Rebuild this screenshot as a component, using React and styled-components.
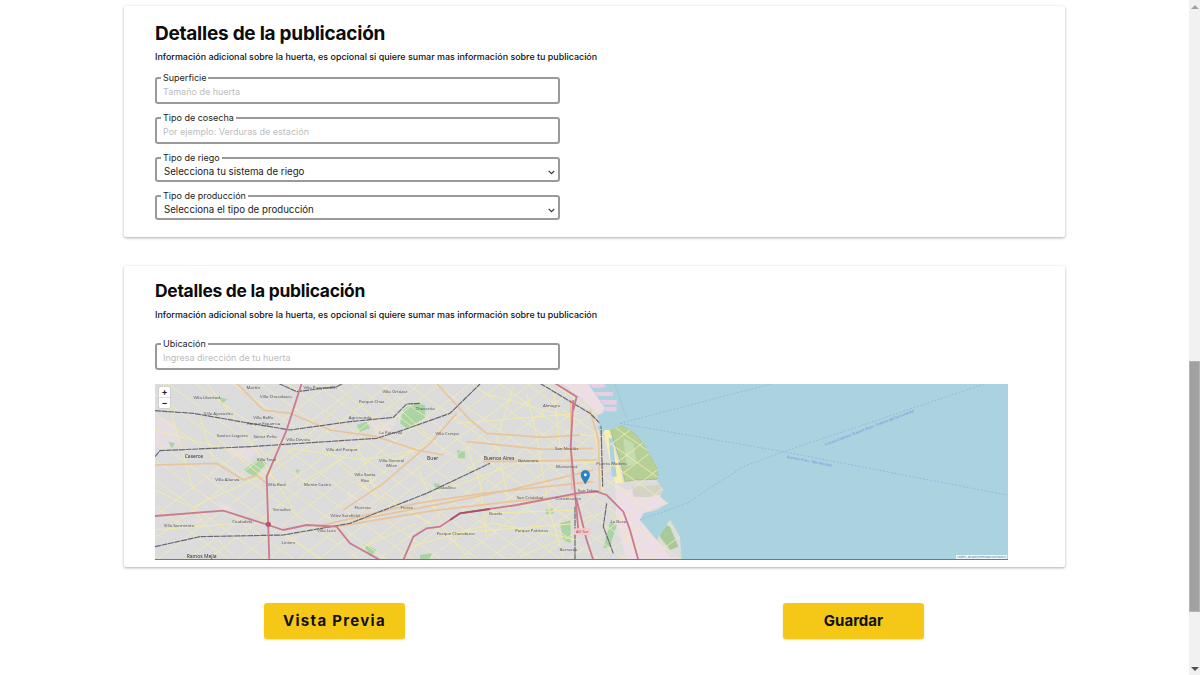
import React from 'react';
import styled, { createGlobalStyle } from 'styled-components';

const GlobalStyle = createGlobalStyle`
  html, body {
    margin: 0;
    padding: 0;
    background: #fff;
    font-family: "Inter", "Noto Sans", sans-serif;
    color: #111;
  }
`

const chevron = "data:image/svg+xml,%3Csvg xmlns='http://www.w3.org/2000/svg' width='7' height='5'%3E%3Cpath d='M.7 .9L3.5 3.6L6.3 .9' fill='none' stroke='%23333' stroke-width='1.2'/%3E%3C/svg%3E"

const Shell = styled.div`
  display: flex;
  height: 675px;
  overflow: hidden;
`

const Page = styled.main`
  flex: 1;
  padding: 6px 124px 0;
  box-sizing: border-box;
`

const Card = styled.section`
  background: #fff;
  box-shadow: 0 1px 3px rgba(0, 0, 0, 0.32);
  border-radius: 2px;
  padding: ${(p) => p.$padding};
  margin-bottom: 29px;
  box-sizing: border-box;
  height: ${(p) => p.$height}px;
`

const Title = styled.h2`
  margin: 0;
  font-size: ${(p) => p.$size}px;
  line-height: 24px;
  font-weight: 700;
  letter-spacing: -0.25px;
  color: #0c0c0c;
`

const Subtitle = styled.p`
  margin: ${(p) => p.$top}px 0 ${(p) => p.$bottom}px;
  font-size: 8.94px;
  line-height: 12px;
  font-weight: 500;
  color: #111;
`

const Field = styled.fieldset`
  width: 405px;
  margin: 0 0 ${(p) => p.$gap}px;
  padding: 0 6px;
  box-sizing: border-box;
  border: 2px solid #9a9a9a;
  border-radius: 3px;
  min-width: 0;
`

const Legend = styled.legend`
  padding: 0 2px;
  margin-left: -2px;
  font-size: 9px;
  line-height: 12px;
  color: #222;
`

const TextInput = styled.input`
  display: block;
  width: 100%;
  height: 15px;
  margin-bottom: 3px;
  padding: 0;
  border: 0;
  outline: 0;
  font-family: inherit;
  font-size: 9px;
  color: #222;
  background: transparent;

  &::placeholder {
    color: #bcbcbc;
    opacity: 1;
  }
`

const SelectInput = styled.select`
  appearance: none;
  display: block;
  width: calc(100% + 6px);
  height: 16px;
  margin: 0 -6px 0 0;
  padding: 0 0 2px 1px;
  border: 0;
  outline: 0;
  background: url("${chevron}") no-repeat right 3px center;
  font-family: inherit;
  font-size: 9.7px;
  color: #222;
`

const MapFrame = styled.div`
  position: relative;
  width: 853px;
  height: 176px;
  margin-top: 14px;
  overflow: hidden;
  border-bottom: 1px solid #777;
  box-sizing: border-box;
`

const MapDrawing = styled.svg`
  display: block;
  width: 853px;
  height: 175px;
  filter: blur(0.35px);
`

const ZoomBox = styled.div`
  position: absolute;
  top: 3px;
  left: 4px;
  width: 11px;
  display: flex;
  flex-direction: column;
  background: #fff;
  border-radius: 1px;
  box-shadow: 0 0 1px rgba(0, 0, 0, 0.5);
`

const ZoomKey = styled.span`
  height: 10px;
  font-size: 9px;
  line-height: 10px;
  font-weight: 700;
  text-align: center;
  color: #222;
  & + & {
    border-top: 1px solid #ddd;
  }
`

const Attribution = styled.div`
  position: absolute;
  right: 1px;
  bottom: 0;
  padding: 0 1px;
  font-size: 2.6px;
  line-height: 4px;
  color: #4a7fb5;
  background: rgba(255, 255, 255, 0.8);
`

const Actions = styled.div`
  display: flex;
  justify-content: space-between;
  padding: 7px 141px 0 140px;
`

const ActionButton = styled.button`
  width: 141px;
  height: 36px;
  padding: 0 0 2px;
  border: 0;
  border-radius: 3px;
  background: #f5c818;
  box-shadow: 0 1px 2px rgba(200, 160, 0, 0.35);
  font-family: inherit;
  font-size: ${(p) => p.$size}px;
  font-weight: 700;
  letter-spacing: ${(p) => p.$spacing}px;
  color: #111;
`

const Scrollbar = styled.aside`
  width: 11px;
  flex: none;
  display: flex;
  flex-direction: column;
  align-items: center;
  background: #f1f1f1;
`

const ScrollArrow = styled.span`
  width: 0;
  height: 0;
  margin: ${(p) => p.$margin};
  border-left: 4px solid transparent;
  border-right: 4px solid transparent;
  ${(p) => (p.$down ? 'border-top: 4px solid #505050;' : 'border-bottom: 4px solid #a3a3a3;')}
`

const ScrollThumb = styled.div`
  width: 100%;
  height: 251px;
  margin-top: 352px;
  background: #a1a1a1;
  border: 1px solid #b5b5b5;
  box-sizing: border-box;
`

const landShape = 'M15 12H1315L1365 85L1360 100L1342 105L1350 135L1365 150L1380 150L1415 135L1455 160L1480 190L1520 260L1525 280L1520 300L1540 330L1530 350L1555 370L1520 390L1480 400L1470 420L1520 480L1560 420L1590 470L1595 540H15Z'

// the regular arterial grid of the city, two diagonal families
const risingStreets = Array.from({ length: 26 }, (_, i) => {
  const x = -160 + i * 82 + ((i * 37) % 29)
  return `M${x} 540L${x + 700} 12`
})

const fallingStreets = Array.from({ length: 24 }, (_, i) => {
  const x = -500 + i * 90 + ((i * 23) % 31)
  return `M${x} 12L${x + 740} 540`
})

const minorStreets = [
  'M40 10L130 330', 'M15 150L240 210L330 285', 'M15 330L120 380', 'M130 380L340 285', 'M170 10L280 150',
  'M280 150L450 420', 'M330 285L430 205L590 60', 'M430 205L640 240L800 210', 'M440 315L560 245L700 370',
  'M620 190L680 340', 'M600 300L840 430', 'M700 40L900 230', 'M560 20L720 150', 'M710 250L860 180',
  'M800 260L890 460L960 540', 'M880 330L1100 250L1290 250', 'M1000 400L1290 390', 'M1090 20L1040 180L1080 390',
  'M1130 40L1160 170L1200 400L1240 530', 'M950 200L990 310L1010 470', 'M890 460L1290 430', 'M780 500L1030 430L1290 480',
  'M15 450L260 430', 'M120 380L250 530', 'M400 465L520 540', 'M640 500L800 430', 'M1110 530L1230 480', 'M1000 40L1290 120',
  'M920 130L1290 100', 'M1210 20L1230 200', 'M150 110L190 240', 'M1290 250L1350 245', 'M1270 160L1340 170', 'M1290 420L1350 400',
  'M1380 400L1440 470', 'M1335 150L1360 340',
]

const primaryRoads = [
  'M260 10L340 90L420 100L540 150L680 170L800 210L880 225', 'M860 10L960 120L1010 160L1180 172L1290 165',
  'M15 255L200 250L280 300L320 285L350 310', 'M580 390L700 310L840 190L920 100', 'M950 185L1180 208L1330 205',
  'M1000 245L1340 240', 'M500 440L800 370L1000 340L1330 305', 'M560 440L850 392L1080 365L1290 345',
  'M620 420L880 370L1100 325L1330 270', 'M1262 60L1265 330', 'M1320 90L1345 180L1350 335',
]

const motorways = [
  'M455 10L410 150L350 290L358 540', 'M15 408L220 392L355 435L400 450L470 435L560 440L600 490L690 540',
  'M760 540L790 470L830 445L870 440L930 400L1100 375L1280 340', 'M1270 60L1262 200L1275 340L1285 450',
  'M1215 10L1280 50L1270 90', 'M1278 340L1340 335L1370 345L1420 395L1440 450L1465 540', 'M1280 360L1310 480L1330 540',
]

const railways = [
  'M15 92L130 100L300 130L420 150L600 125L730 112L770 72L810 70', 'M15 230L30 212L300 200L680 175L760 150L900 100L990 12',
  'M15 500L150 470L400 465L600 430L830 340L1020 250', 'M385 10L440 35L560 20L580 10', 'M1170 10L1320 100L1350 130',
  'M1275 380L1275 540', 'M1353 130L1358 320', 'M1370 370L1360 440L1390 520',
]

const greens = [
  'M750 130L760 90L790 68L825 75L825 115L770 145Z', 'M280 270L330 235L350 250L315 290Z', 'M920 210L945 215L945 235L925 235Z',
  'M205 50L232 58L215 72Z', 'M620 135L650 125L660 145L630 155Z', 'M850 310L870 312L860 330Z', 'M640 490L680 510L660 530Z',
  'M1185 390L1210 385L1212 400L1190 405Z', 'M810 525L845 520L840 540L810 540Z', 'M1230 430L1262 420L1262 490L1240 480Z',
  'M1380 425L1400 435L1380 500L1360 505Z', 'M55 185L75 190L65 205Z', 'M435 268L450 270L442 282Z',
]

const pale = [
  'M15 110L70 125L90 190L40 210L15 200Z', 'M220 200L330 195L300 240L240 225Z', 'M660 125L740 120L725 155L680 165Z',
  'M200 360L260 390L225 405Z', 'M590 340L600 330L610 370L595 365Z', 'M120 420L160 415L150 432Z',
]

const labels = [
  ['Martín', 310, 26], ['Villa Pueyrredón', 510, 26], ['Villa Ortúzar', 735, 38], ['Parque Chas', 665, 69], ['Villa Libertad', 170, 58],
  ['Villa Chacabuco', 378, 55], ['Villa Ayacucho', 205, 104], ['Villa Raffo', 340, 117], ['Parque Figueroa', 340, 134],
  ['Agronomía', 630, 116], ['Chacarita', 825, 89], ['La Paternal', 722, 161], ['Almagro', 1205, 82], ['Santos Lugares', 247, 171],
  ['Sáenz Peña', 345, 174], ['Villa Devoto', 445, 184], ['Villa Crespo', 892, 164], ['Villa del Parque', 575, 214],
  ['Villa Tesei', 350, 242], ['Villa General', 725, 247], ['Mitre', 725, 262],
  ['Balvanera', 1135, 247], ['San Nicolás', 1250, 211], ['Monserrat', 1250, 264], ['Villa Santa', 645, 289], ['Rita', 645, 306],
  ['Villa Alianza', 232, 302], ['Villa Real', 380, 318], ['Monte Castro', 503, 318], ['Caballito', 890, 327], ['Floresta', 638, 387],
  ['Flores', 770, 387], ['Vélez Sarsfield', 585, 411], ['Versalles', 395, 394], ['Ciudadela', 277, 429], ['Villa Sarmiento', 87, 440],
  ['Villa Luro', 530, 456], ['Boedo', 1037, 404], ['San Cristóbal', 1140, 357], ['Parque Chacabuco', 917, 464],
  ['Parque Patricios', 1145, 457], ['Barracas', 1255, 514], ['Liniers', 415, 492], ['Constitución', 1255, 359],
  ['Puerto Madero', 1385, 256], ['San Telmo', 1315, 336], ['La Boca', 1405, 428],
]

const bigLabels = [
  ['Caseros', 132, 235], ['Buer', 848, 241], ['Buenos Aires', 1047, 241], ['Ramos Mejía', 155, 535],
]

const CityMap = () => (
  <MapDrawing viewBox="15 12 2559 525" preserveAspectRatio="none">
    <defs>
      <pattern id="blocks" width="6" height="6" patternUnits="userSpaceOnUse" patternTransform="rotate(32)">
        <rect width="6" height="6" fill="#d6d6d6" />
        <path d="M0 0H6M0 0V6" stroke="#f5f5f5" strokeWidth="1.2" />
      </pattern>
      <clipPath id="land">
        <path d={landShape} />
      </clipPath>
    </defs>
    <rect x="15" y="12" width="2559" height="528" fill="#aad3df" />
    <g fill="#e8cfe3">
      <path d="M1315 12H1362L1368 22L1330 24Z" />
      <path d="M1330 36H1388L1390 48L1342 48Z" />
      <path d="M1350 60H1400L1400 74L1360 74Z" />
      <path d="M1362 80H1400L1400 94L1368 94Z" />
    </g>
    <path d="M1395 12L1430 115" fill="none" stroke="#9fb9c4" strokeWidth="1.5" />
    <path d={landShape} fill="url(#blocks)" />
    <g clipPath="url(#land)">
      <path d="M1240 12H1315L1365 85L1345 105L1300 60Z" fill="#ecdde6" />
      <path d="M1395 310L1430 330L1500 320L1550 370L1480 400L1470 420L1520 480L1560 530L1595 540H1430L1400 430Z" fill="#ecdde6" />
      {pale.map((d) => <path key={d} d={d} fill="#e6dde3" />)}
      <path d="M1360 150L1380 150L1420 310L1395 310Z" fill="#f7efb0" />
      <path d="M1376 175L1388 175L1400 290L1386 290Z" fill="#aad3df" />
      <path d="M1350 135L1365 150L1352 165L1342 140Z" fill="#aad3df" />
      <path d="M1380 145L1415 135L1455 160L1480 190L1520 260L1525 280L1520 298L1455 300L1425 305L1410 240L1390 180Z" fill="#b6cf97" stroke="#8aa76f" strokeWidth="1.5" />
      <path d="M1420 175L1450 190L1460 250L1430 260Z" fill="#c3dcb0" />
      <path d="M1445 320L1530 315L1538 340L1500 352L1450 350Z" fill="#d5d3c5" />
      <path d="M1530 430L1560 440L1585 500L1560 510L1530 470Z" fill="#a9c99a" />
      {greens.map((d) => <path key={d} d={d} fill="#a9d4a4" />)}
      <g fill="none" stroke="#f1ebb0" strokeWidth="2.6">
        {risingStreets.map((d) => <path key={d} d={d} />)}
        {fallingStreets.map((d) => <path key={d} d={d} />)}
      </g>
      <g fill="none" stroke="#f2eba2" strokeWidth="3">
        {minorStreets.map((d) => <path key={d} d={d} />)}
      </g>
      <g fill="none" stroke="#e9c49a" strokeWidth="5">
        {primaryRoads.map((d) => <path key={d} d={d} />)}
      </g>
      <g fill="none" stroke="#666670" strokeWidth="3.5" strokeDasharray="18 2">
        {railways.map((d) => <path key={d} d={d} />)}
      </g>
      <g fill="none" stroke="#cc7a8e" strokeWidth="5.5">
        {motorways.map((d) => <path key={d} d={d} />)}
      </g>
      <path d="M900 420L930 400L1020 387" fill="none" stroke="#a85068" strokeWidth="5.5" />
      <circle cx="355" cy="433" r="8" fill="#b8566e" />
    </g>
    <g fill="none" stroke="#7f9fd8" strokeWidth="1.5" strokeDasharray="6 5">
      <path d="M1410 130L1870 10" />
      <path d="M1410 130L1900 215L2570 345" />
      <path d="M1470 420L1610 370L1780 260L1900 215L2510 10" />
    </g>
    <g fontFamily="Noto Sans, sans-serif" fontSize="13" fill="#555" textAnchor="middle">
      {labels.map(([name, x, y]) => <text key={`${name}${x}`} x={x} y={y}>{name}</text>)}
    </g>
    <g fontFamily="Noto Sans, sans-serif" fontSize="15" fill="#333" textAnchor="middle">
      {bigLabels.map(([name, x, y]) => <text key={`${name}${x}`} x={x} y={y}>{name}</text>)}
    </g>
    <g fontFamily="Noto Sans, sans-serif" fontSize="11" fill="#6f8fe0" textAnchor="middle">
      <text transform="translate(1978 247) rotate(11)">Buenos Aires - Montevideo</text>
      <text transform="translate(2160 146) rotate(-21)">Colonia Express: Buenos Aires - Colonia del Sacramento</text>
    </g>
    <rect x="1272" y="445" width="50" height="20" rx="4" fill="#f2c9cc" />
    <text x="1297" y="459" fontFamily="Noto Sans, sans-serif" fontSize="12" fill="#a8464f" textAnchor="middle">AU Sur</text>
    <path d="M1306 312C1298 298 1293 292 1293 284A13 13 0 0 1 1319 284C1319 292 1314 298 1306 312Z" fill="#2a81c4" stroke="#23689f" strokeWidth="1" />
    <circle cx="1306" cy="284" r="4.5" fill="#fff" />
  </MapDrawing>
)

const App = () => {
  return (
    <Shell>
      <GlobalStyle />
      <Page>
        <Card $padding="16px 31px 0" $height={231}>
          <Title $size={19}>Detalles de la publicación</Title>
          <Subtitle $top={5} $bottom={9}>Información adicional sobre la huerta, es opcional si quiere sumar mas información sobre tu publicación</Subtitle>
          <Field $gap={8}>
            <Legend>Superficie</Legend>
            <TextInput placeholder="Tamaño de huerta" />
          </Field>
          <Field $gap={8}>
            <Legend>Tipo de cosecha</Legend>
            <TextInput placeholder="Por ejemplo: Verduras de estación" />
          </Field>
          <Field $gap={8}>
            <Legend>Tipo de riego</Legend>
            <SelectInput defaultValue="">
              <option value="">Selecciona tu sistema de riego</option>
            </SelectInput>
          </Field>
          <Field $gap={0}>
            <Legend>Tipo de producción</Legend>
            <SelectInput defaultValue="">
              <option value="">Selecciona el tipo de producción</option>
            </SelectInput>
          </Field>
        </Card>
        <Card $padding="13px 31px 0" $height={301}>
          <Title $size={17.4}>Detalles de la publicación</Title>
          <Subtitle $top={6} $bottom={17}>Información adicional sobre la huerta, es opcional si quiere sumar mas información sobre tu publicación</Subtitle>
          <Field $gap={0}>
            <Legend>Ubicación</Legend>
            <TextInput placeholder="Ingresa dirección de tu huerta" />
          </Field>
          <MapFrame>
            <CityMap />
            <ZoomBox>
              <ZoomKey>+</ZoomKey>
              <ZoomKey>−</ZoomKey>
            </ZoomBox>
            <Attribution>Leaflet | © OpenStreetMap contributors</Attribution>
          </MapFrame>
        </Card>
        <Actions>
          <ActionButton $size={15} $spacing={1.3}>Vista Previa</ActionButton>
          <ActionButton $size={15} $spacing={0}>Guardar</ActionButton>
        </Actions>
      </Page>
      <Scrollbar>
        <ScrollArrow $margin="5px 0 0" />
        <ScrollThumb />
        <ScrollArrow $down $margin="auto 0 4px" />
      </Scrollbar>
    </Shell>
  )
}

export default App;
